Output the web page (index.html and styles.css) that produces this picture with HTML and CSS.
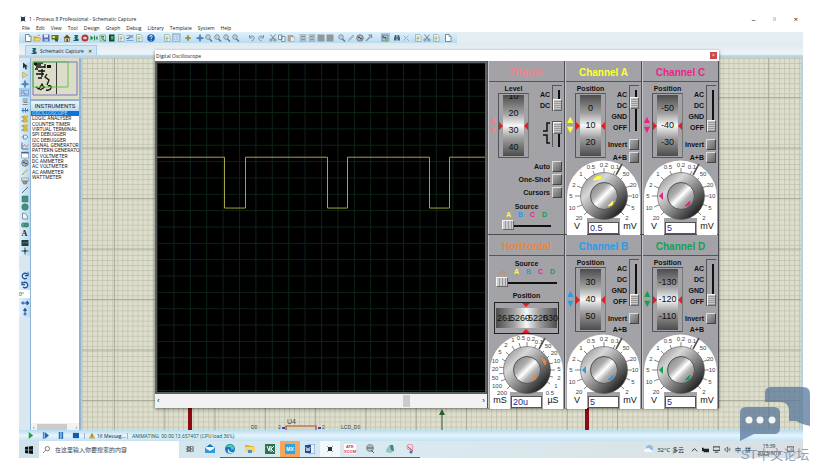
FILE: index.html
```
<!DOCTYPE html>
<html lang="en">
<head>
    <meta charset="UTF-8">
    <title>Schematic Capture</title>
    <link rel="stylesheet" href="styles.css">
</head>
<body>

<!-- shared icons -->
<svg class="defs" aria-hidden="true">
    <defs>
        <linearGradient id="knobOuter" x1="0" y1="0" x2="1" y2="1">
            <stop offset="0" stop-color="#777"/>
            <stop offset=".3" stop-color="#d8d8d8"/>
            <stop offset=".6" stop-color="#777"/>
            <stop offset=".85" stop-color="#222"/>
            <stop offset="1" stop-color="#666"/>
        </linearGradient>
        <linearGradient id="knobInner" x1="0" y1="0" x2="1" y2="1">
            <stop offset="0" stop-color="#777"/>
            <stop offset=".35" stop-color="#b0b0b0"/>
            <stop offset=".5" stop-color="#fff"/>
            <stop offset=".65" stop-color="#b4b4b4"/>
            <stop offset="1" stop-color="#666"/>
        </linearGradient>
        <pattern id="minor" width="5.05" height="5.05" patternUnits="userSpaceOnUse">
            <path d="M0 .5H5.05M.5 0V5.05" stroke="#bfbfaf" stroke-width=".7" fill="none"/>
        </pattern>
        <pattern id="major" x="32" y="39" width="50.3" height="50.5" patternUnits="userSpaceOnUse">
            <path d="M0 .5H50.5M.5 0V50.5" stroke="#a2a294" stroke-width=".8" fill="none"/>
        </pattern>
        <pattern id="scopeGrid" width="16.4" height="16.4" patternUnits="userSpaceOnUse">
            <path d="M0 .5H16.4M.5 0V16.4" stroke="#0c2413" stroke-width="1" fill="none"/>
        </pattern>
        <g id="knob">
            <circle cx="37" cy="36" r="23.500" fill="url(#knobOuter)" stroke="#555" stroke-width=".6"/>
            <circle cx="37" cy="36" r="13.500" fill="url(#knobInner)" stroke="#555"/>
            <path d="M46 41l-5 5 4-1z" fill="currentColor" stroke="currentColor"/>
        </g>
    </defs>

    <symbol id="i-new" viewBox="0 0 16 16"><path d="M3 1h7l4 4v10H3z" fill="#fff" stroke="#55656f" stroke-width="1.5"/><path d="M10 1v4h4" fill="none" stroke="#55656f"/></symbol>
    <symbol id="i-open" viewBox="0 0 16 16"><path d="M1 4h5l1 2h6v8H1z" fill="#e0b040"/><path d="M4 8h12l-3 6H1z" fill="#f5d778" stroke="#9a7a28" stroke-width=".7"/><path d="M9 3q3-3 5 1" stroke="#468" fill="none"/></symbol>
    <symbol id="i-save" viewBox="0 0 16 16"><path d="M1 1h14v14H1z" fill="#6068b8"/><path d="M4 1h8v6H4z" fill="#e6eaff"/><path d="M5 10h7v5H5z" fill="#b4bbe4"/></symbol>
    <symbol id="i-pack" viewBox="0 0 16 16"><path d="M1 2h14v9H1z" fill="#55752a"/><path d="M3 4h5v4H3z" fill="#f0e04a"/><path d="M7 10h7v5H9z" fill="#3b4c66"/></symbol>
    <symbol id="i-home" viewBox="0 0 16 16"><path d="M3 8v7h10V8z" fill="#e6cf8e" stroke="#544018"/><path d="M8 1L1 8h14z" fill="#6e5220"/><path d="M7 10h3v5H7z" fill="#314c31"/></symbol>
    <symbol id="i-isis" viewBox="0 0 16 16"><path d="M4 2h9l-3 3h3l-4 4h4v5H3v-2h4L4 9h3L4 6h3z" fill="#1e5968"/></symbol>
    <symbol id="i-stop" viewBox="0 0 16 16"><circle cx="8" cy="8" r="7" fill="#b83232"/><path d="M4 8h8M8 5v6" stroke="#fff" stroke-width="2"/></symbol>
    <symbol id="i-sim" viewBox="0 0 16 16"><path d="M1 3l6 5-6 5zM8 3h2v10H8zM11 8l4-5v10z" fill="#28864b"/></symbol>
    <symbol id="i-view" viewBox="0 0 16 16"><path d="M2 2h11v12H2z" fill="#d5ead7" stroke="#31814b"/><path d="M4 5h6M4 8h6M6 10l8 4" stroke="#31814b" stroke-width="2"/></symbol>
    <symbol id="i-book" viewBox="0 0 16 16"><path d="M2 1h11v14H2z" fill="#164a30"/><path d="M6 4h5v7H6z" fill="#46bb6c"/></symbol>
    <symbol id="i-page" viewBox="0 0 16 16"><path d="M3 1h8l3 3v11H3z" fill="#f6f8f2" stroke="#728080"/><path d="M5 6h6M5 9h6M5 12h5" stroke="#73945b" stroke-width="1.4"/></symbol>
    <symbol id="i-wave" viewBox="0 0 16 16"><path d="M1 3h14M1 13h14" stroke="#4465a0"/><path d="M1 9h5v-3h8" stroke="#4465a0" stroke-width="2" fill="none"/></symbol>
    <symbol id="i-help" viewBox="0 0 16 16"><circle cx="8" cy="8" r="7.5" fill="#1a59b4"/><path d="M5.500 6q0-3 2.500-3t2.500 2.500q0 1.500-2.500 3V10M8 11.500v2" fill="none" stroke="#fff" stroke-width="1.800"/></symbol>
    <symbol id="i-grid" viewBox="0 0 16 16"><path d="M1 1h14v14H1z" fill="#c9dff0" stroke="#7b9fbd"/><path d="M2 5h12M2 8h12M2 11h12" stroke="#54718b" stroke-dasharray="1 2"/></symbol>
    <symbol id="i-origin" viewBox="0 0 16 16"><path d="M8 2v12M2 8h12" stroke="#756d24" stroke-width="2"/><circle cx="8" cy="8" r="3" fill="#9b8b28"/></symbol>
    <symbol id="i-plus" viewBox="0 0 16 16"><path d="M8 1v14M1 8h14" stroke="#225c9c" stroke-width="2.5"/><path d="M5 5h6v6H5z" fill="#4b84bf"/></symbol>
    <symbol id="i-zoom" viewBox="0 0 16 16"><circle cx="6" cy="6" r="4.5" fill="#dde9ed" stroke="#5e7281" stroke-width="1.6"/><path d="M9 10l5 5" stroke="#5e7281" stroke-width="2.5"/><path d="M4 6h4" stroke="#5e7281"/></symbol>
    <symbol id="i-undo" viewBox="0 0 16 16"><path d="M3 2v6h6M3 8q2-5 7-4 4 2 2 6-1 3-5 4" fill="none" stroke="#8094a3" stroke-width="2"/></symbol>
    <symbol id="i-redo" viewBox="0 0 16 16"><path d="M13 2v6H7M13 8q-2-5-7-4-4 2-2 6 1 3 5 4" fill="none" stroke="#8094a3" stroke-width="2"/></symbol>
    <symbol id="i-cut" viewBox="0 0 16 16"><path d="M3 1l8 10M13 1L5 11" stroke="#708291" stroke-width="2"/><circle cx="4" cy="12" r="2.3" fill="none" stroke="#708291" stroke-width="1.8"/><circle cx="12" cy="12" r="2.3" fill="none" stroke="#708291" stroke-width="1.8"/></symbol>
    <symbol id="i-copy" viewBox="0 0 16 16"><path d="M1 2h7v9H1zM7 5h7v10H7z" fill="#eef4f8" stroke="#5b758a" stroke-width="1.5"/></symbol>
    <symbol id="i-paste" viewBox="0 0 16 16"><path d="M2 3h10v11H2z" fill="#b2aa98" stroke="#84867c"/><path d="M7 6h8v9H7z" fill="#eee" stroke="#8d969b"/></symbol>
    <symbol id="i-block" viewBox="0 0 16 16"><path d="M1 2h14M3 5h10M1 8h14M3 11h10M1 14h14" stroke="#8998a0" stroke-width="2"/></symbol>
    <symbol id="i-solid" viewBox="0 0 16 16"><path d="M1 1h14v14H1z" fill="#8d999d"/></symbol>
    <symbol id="i-pen" viewBox="0 0 16 16"><path d="M3 14l2-5 7-7 2 2-7 7z" fill="#b9bfbd" stroke="#8e989b"/></symbol>
    <symbol id="i-hammer" viewBox="0 0 16 16"><path d="M2 14L11 5M7 2h6v6" stroke="#7d8d99" stroke-width="2.5" fill="none"/></symbol>
    <symbol id="i-tag" viewBox="0 0 16 16"><path d="M2 2h12v12H2z" fill="#a8c0cc" stroke="#557"/><path d="M3 4l10 8M3 7h7" stroke="#3c5a64" stroke-width="2"/><path d="M9 10h6v5H9z" fill="#83b73c"/></symbol>
    <symbol id="i-app" viewBox="0 0 16 16"><path d="M3 2l10 12M13 2L3 14" stroke="#8ba4bd" stroke-width="2"/><path d="M4 4h8v8H4z" fill="#2c4257"/></symbol>
    <symbol id="i-find" viewBox="0 0 16 16"><path d="M2 13V8l2-6h3v5h2V2h3l2 6v5H9v-4H7v4z" fill="#4c6071"/></symbol>
    <symbol id="i-cross" viewBox="0 0 16 16"><path d="M3 13L13 3M3 3l4 4M10 10l4 4" stroke="#9dadb9" stroke-width="2"/></symbol>

    <symbol id="t-arrow" viewBox="0 0 16 16"><path d="M4 1v12l3-3 2 5 3-1-2-5h4z" fill="#27343e"/></symbol>
    <symbol id="t-play" viewBox="0 0 16 16"><path d="M3 2v12l10-6z" fill="#e8d878" stroke="#999050"/></symbol>
    <symbol id="t-label" viewBox="0 0 16 16"><path d="M1 3h14v10H1z" fill="#bdd3ec" stroke="#5d82ba"/><path d="M3 6h3v4h7" stroke="#4b72b5" fill="none" stroke-width="1.5"/></symbol>
    <symbol id="t-text" viewBox="0 0 16 16"><path d="M3 2h10M3 6h10M5 9h8M3 13h10" stroke="#70808b" stroke-width="1.8"/></symbol>
    <symbol id="t-bus" viewBox="0 0 16 16"><path d="M1 9h14M4 4v9M9 4v9M13 6v5" stroke="#3f75bb" stroke-width="2"/></symbol>
    <symbol id="t-chip" viewBox="0 0 16 16"><path d="M4 1h10v5h-2v3h2v6H4z" fill="#d8b83c"/><path d="M1 4h4M1 12h4" stroke="#65747b" stroke-width="2"/></symbol>
    <symbol id="t-term" viewBox="0 0 16 16"><path d="M5 4h5l4 4-4 4H5zM1 8h4" fill="#e9eef0" stroke="#55738b" stroke-width="1.4"/></symbol>
    <symbol id="t-graph" viewBox="0 0 16 16"><path d="M2 1v13h13" stroke="#3c6ba5" fill="none" stroke-width="2"/><path d="M3 11l4-6 4 5 4-5" stroke="#b36b5d" fill="none" stroke-width="1.5"/></symbol>
    <symbol id="t-win" viewBox="0 0 16 16"><path d="M1 2h14v12H1z" fill="#fff" stroke="#526f8f"/><path d="M1 2h14v3H1z" fill="#446999"/></symbol>
    <symbol id="t-gen" viewBox="0 0 16 16"><circle cx="8" cy="8" r="6.5" fill="#aebac3" stroke="#5d6770" stroke-width="1.5"/><path d="M4 8q2-5 4 0t4 0" stroke="#222" fill="none" stroke-width="1.5"/></symbol>
    <symbol id="t-probe" viewBox="0 0 16 16"><path d="M2 14l5-5" stroke="#61717a" stroke-width="1.5"/><path d="M6 10l7-7" stroke="#d4be52" stroke-width="3"/></symbol>
    <symbol id="t-meter" viewBox="0 0 16 16"><path d="M1 2h14v6H1z" fill="#dce2e2" stroke="#65747d"/><path d="M3 8h10l-2 6H5z" fill="#a3977c" stroke="#655f53"/></symbol>
    <symbol id="t-line" viewBox="0 0 16 16"><path d="M2 14L14 2" stroke="#425d70" stroke-width="1.8"/></symbol>
    <symbol id="t-box" viewBox="0 0 16 16"><path d="M2 2h12v12H2z" fill="#43917d" stroke="#306f61"/></symbol>
    <symbol id="t-circle" viewBox="0 0 16 16"><circle cx="8" cy="8" r="6.5" fill="#43917d" stroke="#306f61"/></symbol>
    <symbol id="t-arc" viewBox="0 0 16 16"><path d="M3 2q10 0 10 12H3z" fill="#edf7f7" stroke="#536e80" stroke-width="1.4"/></symbol>
    <symbol id="t-path" viewBox="0 0 16 16"><circle cx="5" cy="8" r="4.5" fill="#5f9f8e" stroke="#306f61"/><circle cx="11" cy="8" r="4.5" fill="#43917d" stroke="#306f61"/></symbol>
    <symbol id="t-symbol" viewBox="0 0 16 16"><path d="M1 2h14v12H1z" fill="#243c3f"/><path d="M3 9l4-3 3 3 4-3" stroke="#9db5a2" fill="none"/></symbol>
    <symbol id="t-marker" viewBox="0 0 16 16"><path d="M8 1v14M1 8h14" stroke="#3b5058" stroke-width="2"/><circle cx="8" cy="8" r="2.5" fill="#3b5058"/></symbol>
    <symbol id="t-cw" viewBox="0 0 16 16"><path d="M12 4q-4-3-8 0-3 4 0 8 4 3 8 0M14 1v6H8" fill="none" stroke="#27509a" stroke-width="2.5"/></symbol>
    <symbol id="t-ccw" viewBox="0 0 16 16"><path d="M4 4q4-3 8 0 3 4 0 8-4 3-8 0M2 1v6h6" fill="none" stroke="#27509a" stroke-width="2.5"/></symbol>
    <symbol id="t-fliph" viewBox="0 0 16 16"><path d="M0 8h16M4 5v6M12 4l3 4-3 4z" fill="#27509a" stroke="#27509a" stroke-width="2"/></symbol>
    <symbol id="t-flipv" viewBox="0 0 16 16"><path d="M8 1v14M5 12h6M5 5l3-4 3 4z" fill="#27509a" stroke="#27509a" stroke-width="2"/></symbol>

    <!-- volts/div scale -->
    <symbol id="volts" viewBox="0 0 73 62">
        <path d="M0 62V37a36.500 36.500 0 0 1 73 0v25H53v-4H20v4z" fill="#fff"/>
        <g stroke="#666" stroke-width=".8">
            <path d="M37 8v6M26 11l2 5M17 17l4 4M10 26l5 2M8 36h6M10 47l5-2M17 55l4-4M48 11l-2 4M55 18l-4 4M63 26l-5 2M65 36h-6M63 46l-5-2M57 55l-4-4"/>
        </g>
        <path d="M55 4l-6 11" stroke="#555" stroke-width="1.600"/>
        <g class="scale">
            <text x="12" y="60">20</text><text x="5" y="50">10</text><text x="4" y="38">5</text><text x="7" y="27">2</text>
            <text x="14" y="16">1</text><text x="24" y="9">0.5</text><text x="37" y="7">0.2</text><text x="48" y="9">0.1</text>
            <text x="59" y="16">50</text><text x="66" y="27">20</text><text x="68" y="38">10</text><text x="66" y="50">5</text><text x="60" y="60">2</text>
        </g>
        <use href="#knob"/>
    </symbol>
    <!-- time/div scale -->
    <symbol id="times" viewBox="0 0 73 62">
        <path d="M0 62V37a36.500 36.500 0 0 1 73 0v25H53v-4H20v4z" fill="#fff"/>
        <path d="M37 8v6M29 9l2 6M22 12l3 5M16 18l4 4M12 25l5 3M9 33l6 1M9 40l6-1M11 47l5-2M17 55l4-4M46 11l-2 4M54 17l-4 4M59 22l-4 4M63 29l-5 1M65 36h-6M63 43l-5-1M60 50l-4-3" stroke="#666" stroke-width=".8"/>
        <path d="M55 4l-6 11" stroke="#555" stroke-width="1.600"/>
        <g class="scale">
            <text x="12" y="61">200</text><text x="7" y="54">100</text><text x="5" y="46">50</text><text x="5" y="37">20</text>
            <text x="5" y="29">10</text><text x="10" y="20">5</text><text x="16" y="13">2</text><text x="23" y="8">1</text>
            <text x="31" y="6">0.5</text><text x="41" y="7">0.2</text><text x="49" y="10">0.1</text><text x="58" y="14">50</text>
            <text x="64" y="21">20</text><text x="67" y="29">10</text><text x="69" y="37">5</text><text x="69" y="46">2</text><text x="66" y="54">1</text><text x="60" y="61">0.5</text>
        </g>
        <use href="#knob"/>
    </symbol>
</svg>

<div class="screen">
    <header class="titlebar">
        <svg class="ic"><use href="#i-app"/></svg>
        <span class="caption">1 - Proteus 8 Professional - Schematic Capture</span>
        <div class="winbtns">
            <button aria-label="Minimize">–</button>
            <button aria-label="Restore">▫</button>
            <button aria-label="Close">×</button>
        </div>
    </header>
    <nav class="menubar">
        <button>File</button><button>Edit</button><button>View</button><button>Tool</button><button>Design</button><button>Graph</button><button>Debug</button><button>Library</button><button>Template</button><button>System</button><button>Help</button>
    </nav>
    <div class="toolbar">
        <div class="strip">
            <div class="group">
                <button aria-label="New"><svg><use href="#i-new"/></svg></button><button aria-label="Open"><svg><use href="#i-open"/></svg></button><button aria-label="Save"><svg><use href="#i-save"/></svg></button><button aria-label="Import"><svg><use href="#i-pack"/></svg></button>
            </div>
            <div class="group">
                <button aria-label="Home"><svg><use href="#i-home"/></svg></button><button aria-label="Schematic"><svg><use href="#i-isis"/></svg></button><button aria-label="PCB"><svg><use href="#i-stop"/></svg></button><button aria-label="3D"><svg><use href="#i-sim"/></svg></button><button aria-label="Gerber"><svg><use href="#i-view"/></svg></button><button aria-label="Explorer"><svg><use href="#i-book"/></svg></button><button aria-label="Bill"><svg><use href="#i-page"/></svg></button><button aria-label="Code"><svg><use href="#i-wave"/></svg></button><button aria-label="Notes"><svg><use href="#i-page"/></svg></button>
            </div>
            <div class="group">
                <button aria-label="Help"><svg><use href="#i-help"/></svg></button>
            </div>
            <div class="group wide">
                <button aria-label="Redraw"><svg><use href="#i-page"/></svg></button><button class="on" aria-label="Grid"><svg><use href="#i-grid"/></svg></button>
            </div>
            <div class="group">
                <button aria-label="Origin"><svg><use href="#i-origin"/></svg></button>
            </div>
            <div class="group">
                <button aria-label="Centre"><svg><use href="#i-plus"/></svg></button><button aria-label="Zoom in"><svg><use href="#i-zoom"/></svg></button><button aria-label="Zoom out"><svg><use href="#i-zoom"/></svg></button><button aria-label="Zoom all"><svg><use href="#i-zoom"/></svg></button><button aria-label="Zoom area"><svg><use href="#i-zoom"/></svg></button>
            </div>
            <div class="group wide">
                <button aria-label="Undo"><svg><use href="#i-undo"/></svg></button><button aria-label="Redo"><svg><use href="#i-redo"/></svg></button>
            </div>
            <div class="group">
                <button aria-label="Cut"><svg><use href="#i-cut"/></svg></button><button aria-label="Copy"><svg><use href="#i-copy"/></svg></button><button aria-label="Paste"><svg><use href="#i-paste"/></svg></button>
            </div>
            <div class="group">
                <button aria-label="Block copy"><svg><use href="#i-block"/></svg></button><button aria-label="Block move"><svg><use href="#i-block"/></svg></button><button aria-label="Block rotate"><svg><use href="#i-solid"/></svg></button><button aria-label="Block delete"><svg><use href="#i-solid"/></svg></button>
            </div>
            <div class="group">
                <button aria-label="Pick"><svg><use href="#i-zoom"/></svg></button><button aria-label="Make"><svg><use href="#i-pen"/></svg></button><button aria-label="Package"><svg><use href="#t-gen"/></svg></button><button aria-label="Decompose"><svg><use href="#i-hammer"/></svg></button>
            </div>
            <div class="group wide">
                <button class="on" aria-label="Autorouter"><svg><use href="#i-tag"/></svg></button>
            </div>
            <div class="group">
                <button aria-label="Search"><svg><use href="#i-find"/></svg></button><button aria-label="Property"><svg><use href="#i-cross"/></svg></button>
            </div>
            <div class="group">
                <button aria-label="New sheet"><svg><use href="#i-page"/></svg></button><button aria-label="Remove sheet"><svg><use href="#i-cut"/></svg></button><button aria-label="Exit sheet"><svg><use href="#i-page"/></svg></button>
            </div>
            <div class="group">
                <button aria-label="Report"><svg><use href="#i-new"/></svg></button>
            </div>
        </div>
    </div>
    <div class="tabs">
        <div class="tab">
            <svg class="ic"><use href="#i-isis"/></svg>
            <span>Schematic Capture</span>
            <button aria-label="Close tab">✕</button>
        </div>
    </div>

    <main class="main">
        <div class="modes">
            <div class="modelist">
                <button aria-label="Selection"><svg><use href="#t-arrow"/></svg></button>
                <button aria-label="Component"><svg><use href="#t-play"/></svg></button>
                <button aria-label="Junction"><svg><use href="#i-plus"/></svg></button>
                <button class="on" aria-label="Label"><svg><use href="#t-label"/></svg></button>
                <button aria-label="Script"><svg><use href="#t-text"/></svg></button>
                <button aria-label="Bus"><svg><use href="#t-bus"/></svg></button>
                <button aria-label="Subcircuit"><svg><use href="#t-chip"/></svg></button>
                <button aria-label="Terminals"><svg><use href="#t-chip"/></svg></button>
                <button aria-label="Pins"><svg><use href="#t-term"/></svg></button>
                <button aria-label="Graph mode"><svg><use href="#t-graph"/></svg></button>
                <button aria-label="Popup"><svg><use href="#t-win"/></svg></button>
                <button aria-label="Generator"><svg><use href="#t-gen"/></svg></button>
                <button aria-label="Probe"><svg><use href="#t-probe"/></svg></button>
                <button aria-label="Instruments"><svg><use href="#t-meter"/></svg></button>
                <button aria-label="Line"><svg><use href="#t-line"/></svg></button>
                <button aria-label="Box"><svg><use href="#t-box"/></svg></button>
                <button aria-label="Circle"><svg><use href="#t-circle"/></svg></button>
                <button aria-label="Arc"><svg><use href="#t-arc"/></svg></button>
                <button aria-label="Path"><svg><use href="#t-path"/></svg></button>
                <button class="letter" aria-label="Text">A</button>
                <button aria-label="Symbol"><svg><use href="#t-symbol"/></svg></button>
                <button aria-label="Marker"><svg><use href="#t-marker"/></svg></button>
            </div>
            <div class="rotate">
                <button aria-label="Rotate clockwise"><svg><use href="#t-cw"/></svg></button>
                <button aria-label="Rotate anticlockwise"><svg><use href="#t-ccw"/></svg></button>
                <input type="text" value="0°" aria-label="Angle">
                <button aria-label="Mirror X"><svg><use href="#t-fliph"/></svg></button>
                <button aria-label="Mirror Y"><svg><use href="#t-flipv"/></svg></button>
            </div>
        </div>

        <aside class="side">
            <svg class="overview" viewBox="0 0 48 41">
                <g fill="none" stroke="#111">
                    <path d="M25.500 4v32" stroke-width=".8"/>
                    <path d="M3 5h9M4 7h6M5 9h9M4 11h3M7 13h7M5 16h8M14 6v4M11 11v8M16 16l-2 3 4 3-2 5M7 20h4M5 29l3 2 3-5 2 4M9 32l5-3M17 28q4-1 3 2t-5 2" stroke-width="1.300"/>
                </g>
                <path d="M16 7h4v3h-4zM3 4h3v3H3z" fill="#111"/>
                <path d="M2 4h44v33H2z" fill="none" stroke="#6c6cc4" stroke-width=".9"/>
                <path d="M2 4h35v25H2z" fill="none" stroke="#4ec43f" stroke-width=".9"/>
            </svg>
            <div class="panel">
                <h2>INSTRUMENTS</h2>
                <ul>
                    <li class="sel">OSCILLOSCOPE</li>
                    <li>LOGIC ANALYSER</li>
                    <li>COUNTER TIMER</li>
                    <li>VIRTUAL TERMINAL</li>
                    <li>SPI DEBUGGER</li>
                    <li>I2C DEBUGGER</li>
                    <li>SIGNAL GENERATOR</li>
                    <li>PATTERN GENERATO</li>
                    <li>DC VOLTMETER</li>
                    <li>DC AMMETER</li>
                    <li>AC VOLTMETER</li>
                    <li>AC AMMETER</li>
                    <li>WATTMETER</li>
                </ul>
                <div class="hscroll"><button aria-label="Left">‹</button><i></i><button aria-label="Right">›</button></div>
            </div>
        </aside>

        <div class="editor">
            <svg class="sheet">
                <rect width="100%" height="100%" fill="url(#minor)"/>
                <rect width="100%" height="100%" fill="url(#major)"/>
                <path d="M108 345v30M505 345v30" stroke="#8c0a12" stroke-width="4"/>
                <path d="M204 375v-7h30v7" fill="#d6d3b0" stroke="#a8483a" stroke-width="1.200"/>
                <path d="M360 375v-22" stroke="#285c28"/>
                <path d="M360 351l-3 6h6z" fill="#285c28"/>
                <path d="M200 369h3v2h-3zM236 369h3v2h-3z" fill="#4040c0"/>
                <g class="net">
                    <text x="205" y="366" class="ref">U4</text>
                    <text x="169" y="371">D0</text>
                    <text x="196" y="371">2</text>
                    <text x="240" y="371">2</text>
                    <text x="259" y="371">LCD_D0</text>
                </g>
            </svg>
        </div>
    </main>

    <footer class="status">
        <div class="run">
            <button aria-label="Play"><svg viewBox="0 0 8 8"><path d="M2 0v8l5-4z" fill="#25a23b"/></svg></button>
            <button aria-label="Step"><svg viewBox="0 0 8 8"><path d="M1 0h1v8H1zM3 0v8l5-4z" fill="#1f65b7"/></svg></button>
            <button aria-label="Pause"><svg viewBox="0 0 8 8"><path d="M2 0h2v8H2zM5 0h2v8H5z" fill="#2672c2"/></svg></button>
            <button aria-label="Stop"><svg viewBox="0 0 8 8"><path d="M1 1h7v6H1z" fill="#115dad"/></svg></button>
        </div>
        <div class="messages">
            <svg viewBox="0 0 8 8"><path d="M4 0l4 7H0z" fill="#f0c52e" stroke="#917718" stroke-width=".4"/><path d="M4 2v3M4 6v.7" stroke="#222"/></svg>
            <span>16 Messag...</span>
        </div>
        <span class="anim">ANIMATING: 00:00:13.657407 (CPU load 36%)</span>
    </footer>

    <div class="taskbar">
        <button class="start" aria-label="Start"><svg viewBox="0 0 8 8"><path d="M0 1l3-.5v3.200H0zM3.700.5L8 0v3.700H3.700zM0 4.300h3v3.200L0 7zM3.700 4.300H8V8l-4.300-.5z" fill="#111"/></svg></button>
        <label class="search">
            <svg viewBox="0 0 8 8"><circle cx="5" cy="3" r="2.500" fill="none" stroke="#333" stroke-width=".7"/><path d="M3 5L0 8" stroke="#333" stroke-width=".7"/></svg>
            <input type="text" placeholder="在这里输入你要搜索的内容" aria-label="Search">
        </label>
        <div class="apps">
            <button aria-label="Task view"><svg viewBox="0 0 10 10"><path d="M2 2v1h4V2M2 8V7h4v1M2 4h4v2H2zM8 2v6" fill="none" stroke="#333" stroke-width=".8"/></svg></button>
            <button aria-label="Mail"><svg viewBox="0 0 10 10"><path d="M0 4l5-4 5 4v5H0z" fill="#1270b8"/><path d="M1 3h8v3L5 8 1 6z" fill="#eef6fb"/><path d="M0 4l5 3 5-3v5H0z" fill="#2f9bdf"/></svg></button>
            <button class="open" aria-label="Edge"><svg viewBox="0 0 10 10"><circle cx="5" cy="5" r="5" fill="#1878c8"/><path d="M1 3q4-5 8 0 1 3-3 3 1-3-2-3T1 3z" fill="#4bcf9b"/><path d="M4 5q0 4 5 3-4 3-6 0-1-2 1-3z" fill="#d8eff8"/></svg></button>
            <button class="open" aria-label="Files"><svg viewBox="0 0 10 10"><path d="M0 1h4l1 1h4v6H0z" fill="#eab32e"/><path d="M0 3h10v5H0z" fill="#f8d66c"/><path d="M3 6h4v3H3z" fill="#4c8fc4"/></svg></button>
            <button class="open" aria-label="Keil"><svg viewBox="0 0 10 10"><path d="M0 0h10v10H0z" fill="#2b7350"/><path d="M2 2l2 5 1-5M6 2v6M9 2L6 5l3 3" stroke="#fff" fill="none"/></svg></button>
            <button class="open hot" aria-label="CubeMX"><span>MX</span></button>
            <button class="open" aria-label="Word"><svg viewBox="0 0 10 10"><path d="M4 0h6v10H4z" fill="#e5eef9" stroke="#2858a0" stroke-width=".6"/><path d="M0 1h6v8H0z" fill="#214f99"/><path d="M1 3l1 4 1-3 1 3 1-4" stroke="#fff" fill="none" stroke-width=".7"/></svg></button>
            <button class="open active" aria-label="Proteus"><svg viewBox="0 0 10 10"><path d="M2 2l6 6M8 2L2 8" stroke="#8aa0b6"/><path d="M3 3h4v4H3z" fill="#26333c"/></svg></button>
            <button class="open" aria-label="ATK XCOM"><span class="atk">ATK<br>XCOM</span></button>
            <button class="open" aria-label="Viewer"><svg viewBox="0 0 10 10"><circle cx="5" cy="4" r="3.500" fill="#b3bcc1" stroke="#67747c" stroke-width=".7"/><path d="M2 4h6M6 6l3 3" stroke="#4f5e68"/></svg></button>
            <button class="open" aria-label="Disk"><svg viewBox="0 0 10 10"><path d="M1 8q0-4 4-7h3l1 6-3 2z" fill="#8fc5c5"/><path d="M5 1h3l1 6-3-1z" fill="#477f87"/></svg></button>
            <button class="open" aria-label="Capture"><svg viewBox="0 0 10 10"><circle cx="5" cy="3" r="3" fill="#f3d7df" stroke="#e0708c" stroke-width=".7"/><path d="M3 3l5 4" stroke="#d33d55"/><circle cx="6" cy="8" r="1.500" fill="#3973bd"/></svg></button>
        </div>
        <div class="tray">
            <svg class="cloud" viewBox="0 0 10 10"><circle cx="6" cy="4" r="4" fill="#8fbce8"/><path d="M0 7q0-3 3-3 3-2 4 1 3 0 2 3H2z" fill="#f2f8fd"/></svg>
            <span class="weather">32°C 多云</span>
            <svg viewBox="0 0 8 8"><path d="M1 6l3-3 3 3" fill="none" stroke="#222"/></svg>
            <svg viewBox="0 0 8 8"><path d="M0 2h2v4H0zM2 3h6v4H2z" fill="#222"/></svg>
            <svg viewBox="0 0 8 8"><path d="M0 1h8v4H0zM2 7h4" fill="none" stroke="#222"/></svg>
            <svg viewBox="0 0 8 8"><path d="M1 3h1l2-2v6L2 5H1zM5 3q1 1 0 2M6 2q2 2 0 4" fill="none" stroke="#222" stroke-width=".6"/></svg>
            <span>中</span>
            <span>拼</span>
            <time>15:39<br>2023/6/16</time>
            <svg viewBox="0 0 8 8"><path d="M0 1h8v5H5L4 7 3 6H0z" fill="none" stroke="#222" stroke-width=".8"/></svg>
        </div>
    </div>

    <!-- oscilloscope window floats over the editor -->
    <section class="scope">
        <div class="scope-title">
            <span>Digital Oscilloscope</span>
            <button aria-label="Close">×</button>
        </div>
        <div class="scope-body">
            <div class="display">
                <svg class="trace" viewBox="0 0 328 330" preserveAspectRatio="none">
                    <rect width="328" height="330" fill="url(#scopeGrid)"/>
                    <path d="M0 94.500H67.500V145.500H88.500V94.500H170.500V145.500H190.500V94.500H272.500V145.500H292.500V94.500H328" fill="none" stroke="#a5a544"/>
                </svg>
                <div class="hscroll big"><button aria-label="Scroll left">‹</button><i></i><button aria-label="Scroll right">›</button></div>
            </div>

            <div class="modules">
                <div class="module trigger">
                    <h3>Trigger</h3>
                    <div class="controls">
                        <div class="position">
                            <span class="name">Level</span>
                            <div class="frame"><div class="wheel four"><b>10</b><b>20</b><b>30</b><b>40</b></div></div>
                        </div>
                        <div class="switches">
                            <div class="coupling two"><div><label for="tc">AC</label><span>DC</span></div><input id="tc" type="range" min="0" max="1" value="1"></div>
                            <div class="coupling edge"><svg viewBox="0 0 8 24"><path d="M1 10h4V2h3M1 14h4v8h3" fill="none" stroke="#111" stroke-width="1.500"/></svg><input type="range" min="0" max="1" value="0" aria-label="Edge"></div>
                        </div>
                    </div>
                    <div class="push">
                        <label>Auto <button></button></label>
                        <label>One-Shot <button></button></label>
                        <label>Cursors <button></button></label>
                    </div>
                    <div class="source">
                        <label for="ts">Source</label>
                        <div class="letters"><b class="a">A</b><b class="b">B</b><b class="c">C</b><b class="d">D</b></div>
                        <input id="ts" type="range" min="0" max="3" value="0">
                    </div>
                </div>

                <div class="module cha">
                    <h3>Channel A</h3>
                    <div class="controls">
                        <div class="position">
                            <span class="name">Position</span>
                            <div class="frame"><div class="wheel"><b>0</b><b>10</b><b>20</b></div></div>
                        </div>
                        <div class="switches">
                            <div class="coupling"><div><label for="ca">AC</label><span>DC</span><span>GND</span><span>OFF</span></div><input id="ca" type="range" min="0" max="3" value="1"></div>
                            <label class="key">Invert <button></button></label>
                            <label class="key">A+B <button></button></label>
                        </div>
                    </div>
                    <div class="dial"><svg viewBox="0 0 73 62"><use href="#volts"/><path d="M26 20q3-4 8-4l-1 3z" fill="currentColor" stroke="currentColor"/></svg></div>
                    <div class="readout"><span>V</span><input type="text" value="0.5" aria-label="Volts A"><span>mV</span></div>
                </div>

                <div class="module chc">
                    <h3>Channel C</h3>
                    <div class="controls">
                        <div class="position">
                            <span class="name">Position</span>
                            <div class="frame"><div class="wheel"><b>-50</b><b>-40</b><b>-30</b></div></div>
                        </div>
                        <div class="switches">
                            <div class="coupling"><div><label for="cc">AC</label><span>DC</span><span>GND</span><span>OFF</span></div><input id="cc" type="range" min="0" max="3" value="3"></div>
                            <label class="key">Invert <button></button></label>
                            <label class="key">A+B <button></button></label>
                        </div>
                    </div>
                    <div class="dial"><svg viewBox="0 0 73 62"><use href="#volts"/><path d="M15 36l4-4v8z" fill="currentColor"/></svg></div>
                    <div class="readout"><span>V</span><input type="text" value="5" aria-label="Volts C"><span>mV</span></div>
                </div>

                <div class="module horizontal">
                    <h3>Horizontal</h3>
                    <div class="source">
                        <label for="hs">Source</label>
                        <div class="letters"><svg viewBox="0 0 9 5"><path d="M0 4l6-3v3l3-3" fill="none" stroke="#e08545"/></svg><b class="a">A</b><b class="b">B</b><b class="c">C</b><b class="d">D</b></div>
                        <input id="hs" type="range" min="0" max="4" value="0">
                    </div>
                    <div class="timepos">
                        <span class="name">Position</span>
                        <div class="hframe"><div class="hwheel"><b>261</b><b>-5260</b><b>-5220</b><b>530</b></div></div>
                    </div>
                    <div class="dial"><svg viewBox="0 0 73 62"><use href="#times"/><path d="M51 23l5 4-1 4z" fill="currentColor" stroke="currentColor"/></svg></div>
                    <div class="readout"><span>mS</span><input type="text" value="20u" aria-label="Time base"><span>µS</span></div>
                </div>

                <div class="module chb">
                    <h3>Channel B</h3>
                    <div class="controls">
                        <div class="position">
                            <span class="name">Position</span>
                            <div class="frame"><div class="wheel"><b>30</b><b>40</b><b>50</b></div></div>
                        </div>
                        <div class="switches">
                            <div class="coupling"><div><label for="cb">AC</label><span>DC</span><span>GND</span><span>OFF</span></div><input id="cb" type="range" min="0" max="3" value="3"></div>
                            <label class="key">Invert <button></button></label>
                            <span class="key bare">A+B</span>
                        </div>
                    </div>
                    <div class="dial"><svg viewBox="0 0 73 62"><use href="#volts"/><path d="M15 36l4-4v8z" fill="currentColor"/></svg></div>
                    <div class="readout"><span>V</span><input type="text" value="5" aria-label="Volts B"><span>mV</span></div>
                </div>

                <div class="module chd">
                    <h3>Channel D</h3>
                    <div class="controls">
                        <div class="position">
                            <span class="name">Position</span>
                            <div class="frame"><div class="wheel"><b>-130</b><b>-120</b><b>-110</b></div></div>
                        </div>
                        <div class="switches">
                            <div class="coupling"><div><label for="cd">AC</label><span>DC</span><span>GND</span><span>OFF</span></div><input id="cd" type="range" min="0" max="3" value="3"></div>
                            <label class="key">Invert <button></button></label>
                            <span class="key bare">A+B</span>
                        </div>
                    </div>
                    <div class="dial"><svg viewBox="0 0 73 62"><use href="#volts"/><path d="M15 36l4-4v8z" fill="currentColor"/></svg></div>
                    <div class="readout"><span>V</span><input type="text" value="5" aria-label="Volts D"><span>mV</span></div>
                </div>
            </div>
        </div>
    </section>
</div>

<div class="watermark">
    <svg viewBox="0 0 72 54">
        <path d="M32 0h32q7 0 7 7v32q-9-2-14-5h-7V24q0-9-9-9H26V6q0-6 6-6z"/>
        <path d="M7 20h28q6 0 6 6v15q0 6-6 6H15q-6 3-14 7V26q0-6 6-6z"/>
        <circle cx="10" cy="33" r="3.500" class="dot"/><circle cx="21" cy="33" r="3.500" class="dot"/><circle cx="33" cy="33" r="3.500" class="dot"/>
    </svg>
    <span>ST中文论坛</span>
</div>

</body>
</html>
```

FILE: styles.css
```
* {
    box-sizing: border-box;
}

body {
    margin: 0;
    background: #fff;
    color: #222;
    font-family: "Open Sans", "Noto Sans CJK SC", sans-serif;
    font-size: 5px;
    overflow: hidden;
}

button, input {
    font: inherit;
    color: inherit;
    margin: 0;
    padding: 0;
    border: 0;
    background: none;
    border-radius: 0;
    outline: none;
    min-width: 0;
}

svg { display: block; }

.defs {
    position: absolute;
    width: 0;
    height: 0;
}

.screen {
    position: relative;
    display: flex;
    flex-direction: column;
    height: calc(100vh - 26px);
    margin: 14px 16px 12px 19px;
}

.ic {
    width: 8px;
    height: 8px;
    flex: none;
}

/* title + menu */
.titlebar {
    display: flex;
    align-items: center;
    gap: 2px;
    height: 10px;
}

.winbtns {
    display: flex;
    gap: 15px;
    margin-left: auto;
    padding-right: 5px;
    font-size: 8px;
    line-height: 10px;
}

.menubar {
    display: flex;
    gap: 6px;
    height: 8px;
    padding-left: 3px;
}

/* toolbar */
.toolbar {
    height: 11px;
    background: #e3edf2;
}

.strip {
    display: flex;
    align-items: center;
    width: 438px;
    height: 11px;
    padding-left: 5px;
    background: linear-gradient(#dff0fa, #b9dcf1);
}

.group {
    display: flex;
    margin-right: 3px;
}

.group.wide { margin-left: 4px; }

.group button {
    width: 9px;
    height: 9px;
}

.group svg {
    width: 8px;
    height: 8px;
}

.on {
    background: #a5cdea;
}

/* tabs */
.tabs {
    display: flex;
    align-items: flex-start;
    height: 15px;
    padding: 2px 0 0 6px;
    background: linear-gradient(#dfe9ee, #edf4f8 75%, #b6d3e8 85%);
}

.tab {
    display: flex;
    align-items: center;
    gap: 2px;
    height: 10px;
    padding: 0 4px;
    background: #cde5f5;
    border: 1px solid #a9cbe0;
    border-bottom: 0;
}

.tab button {
    margin-left: 2px;
}

/* work area */
.main {
    display: flex;
    flex: 1;
    min-height: 0;
    background: #b4d1e8;
}

.modes {
    display: flex;
    flex-direction: column;
    gap: 15px;
    width: 11px;
    padding-top: 4px;
    background: #d9e7f0;
}

.modelist {
    display: flex;
    flex-direction: column;
    height: 194px;
    background: linear-gradient(90deg, #e2f2fc, #b9daf0);
}

.modes button {
    display: flex;
    align-items: center;
    justify-content: center;
    flex: 1;
    min-height: 0;
}

.modes svg {
    width: 8px;
    height: 8px;
}

.modes .letter {
    font: bold 8px/8px "Liberation Serif", serif;
}

.rotate {
    display: flex;
    flex-direction: column;
    height: 46px;
    background: linear-gradient(90deg, #e2f2fc, #b9daf0);
}

.rotate input {
    width: 11px;
    height: 8px;
    background: #fff;
}

.side {
    display: flex;
    flex-direction: column;
    gap: 2px;
    width: 51px;
    padding: 0 2px 0 1px;
    background: #8fb3d4;
}

.overview {
    width: 48px;
    height: 41px;
    background: #dcdcc8;
}

.panel {
    display: flex;
    flex-direction: column;
    flex: 1;
    background: #fff;
    font-family: Roboto, sans-serif;
}

.panel h2 {
    margin: 0;
    height: 10px;
    font-size: 6px;
    line-height: 10px;
    font-weight: normal;
    text-align: center;
    background: linear-gradient(#e9f5fd, #bcdcf0);
}

.panel ul {
    display: flex;
    flex-direction: column;
    height: 69px;
    margin: 0;
    padding: 0;
    list-style: none;
}

.panel li {
    display: flex;
    align-items: center;
    flex: 1;
    padding-left: 1px;
    line-height: 5px;
    white-space: nowrap;
}

.panel .sel {
    color: #b8dbfb;
    background: #0d73d6;
}

.hscroll {
    display: flex;
    align-items: center;
    gap: 2px;
    height: 7px;
    margin-top: auto;
    padding: 0 2px;
    background: #f2f2f2;
    line-height: 6px;
}

.hscroll i {
    flex: 1;
    height: 6px;
    margin-right: 6px;
    background: #cbcbcb;
}

.editor {
    flex: 1;
    min-width: 0;
    border: solid #b4d1e8;
    border-width: 0 2px 0 1px;
    background: #dedecc;
}

.sheet {
    width: 100%;
    height: 100%;
}

.net {
    font: 5px "Liberation Sans", sans-serif;
    fill: #444;
}

.net .ref { font-size: 7px; }

/* run bar */
.status {
    display: flex;
    align-items: center;
    height: 11px;
    padding-left: 8px;
    background: linear-gradient(#b8dcf2, #e6f4fc 50%, #c3e2f3);
}

.run {
    display: flex;
    gap: 8px;
    padding-right: 5px;
}

.run svg {
    width: 7px;
    height: 7px;
}

.messages {
    display: flex;
    align-items: center;
    gap: 2px;
    width: 44px;
    padding-left: 4px;
    border: solid #9bbccf;
    border-width: 0 1px;
}

.messages svg {
    width: 6px;
    height: 6px;
}

.anim {
    padding-left: 4px;
    color: #28603f;
    font-family: Roboto, sans-serif;
}

/* taskbar */
.taskbar {
    display: flex;
    align-items: stretch;
    height: 17px;
    background: linear-gradient(90deg, #cfe2ec, #d9eaf0 50%, #dbdfe1);
}

.start {
    width: 20px;
    padding: 0 6px;
}

.search {
    display: flex;
    align-items: center;
    gap: 5px;
    width: 140px;
    padding-left: 4px;
    background: #fff;
}

.search svg {
    width: 7px;
    height: 7px;
}

.search input {
    flex: 1;
    font-size: 6px;
}

.search input::placeholder { color: #444; }

.apps {
    display: flex;
    padding-left: 1px;
}

.apps button {
    display: flex;
    align-items: center;
    justify-content: center;
    width: 20px;
    border-bottom: 1px solid transparent;
}

.apps svg {
    width: 10px;
    height: 10px;
}

.apps .open { border-bottom-color: #1479bd; }
.apps .active { background: #f3f8fa; }
.apps .hot { background: #f4a55f; }

.apps span {
    width: 10px;
    background: #2fa3dd;
    color: #fff;
    font: bold 5px/10px "Liberation Sans", sans-serif;
}

.apps .atk {
    width: 12px;
    background: #fff;
    color: #e02c3a;
    font-size: 4px;
    line-height: 5px;
}

.tray {
    display: flex;
    align-items: center;
    gap: 4px;
    margin-left: auto;
    padding-right: 9px;
}

.tray svg {
    width: 7px;
    height: 7px;
}

.tray .cloud {
    width: 9px;
    height: 9px;
}

.tray span { font-size: 6px; }
.tray .weather { padding-right: 3px; }

.tray time {
    width: 28px;
    line-height: 7px;
    text-align: center;
}

/* oscilloscope */
.scope {
    position: absolute;
    left: 136px;
    right: 84px;
    top: 36px;
    bottom: 50px;
    display: flex;
    flex-direction: column;
    background: #f0f0f0;
    box-shadow: 0 1px 3px #0008;
}

.scope-title {
    display: flex;
    align-items: center;
    justify-content: space-between;
    height: 11px;
    padding: 0 2px 0 1px;
    background: #fff;
}

.scope-title button {
    width: 7px;
    height: 7px;
    background: #c9494c;
    color: #fff;
    line-height: 7px;
}

.scope-body {
    display: flex;
    flex: 1;
    min-height: 0;
    font-family: "Liberation Sans", sans-serif;
}

.display {
    display: flex;
    flex-direction: column;
    flex: 1;
    min-width: 0;
}

.trace {
    flex: 1;
    width: 100%;
    min-height: 0;
    background: #000;
    border: 2px solid #5c6064;
}

.hscroll.big {
    height: 14px;
    margin: 0;
    font-size: 8px;
}

.hscroll.big i {
    flex: none;
    width: 7px;
    height: 12px;
    margin: 0 auto 0 241px;
}

.modules {
    display: grid;
    grid-template-columns: repeat(3, 76px);
    grid-template-rows: 1fr 1fr;
    gap: 1px;
    padding: 0 1px;
    background: #4c4c50;
}

.module {
    position: relative;
    display: flex;
    flex-direction: column;
    padding: 0 1px;
    background: #a3a3a7;
    border-left: 1px solid #c6c6c8;
    font-size: 7px;
    font-weight: bold;
    color: #111;
}

.module h3 {
    margin: 0 -1px;
    height: 21px;
    border-bottom: 1px solid #55555a;
    font-size: 10px;
    line-height: 24px;
    text-align: center;
    color: var(--tone);
}

.trigger { --tone: #e58592; }
.cha { --tone: #ffff33; }
.chb { --tone: #2a9ce6; }
.chc { --tone: #ea2389; }
.chd { --tone: #12a052; }
.horizontal { --tone: #e48742; }

.controls {
    display: flex;
    justify-content: space-between;
    height: 78px;
    padding: 3px 1px 0 8px;
}

.position {
    display: flex;
    flex-direction: column;
    align-items: center;
    width: 31px;
}

.name {
    line-height: 8px;
}

.frame {
    position: relative;
    width: 31px;
    height: 65px;
    padding: 1px 4px;
    border: 1px solid #55555a;
    border-right-color: #777;
}

/* red pointers either side of the wheel */
.frame::before, .frame::after {
    content: "";
    position: absolute;
    top: 28px;
    border: solid transparent;
    border-width: 4px 0;
}

.frame::before {
    left: 0;
    border-left: 4px solid #e81c1c;
}

.frame::after {
    right: 0;
    border-right: 4px solid #e81c1c;
}

.wheel {
    display: flex;
    flex-direction: column;
    align-items: center;
    justify-content: center;
    height: 61px;
    overflow: hidden;
    background: linear-gradient(#4c4c4c, #a0a0a0 30%, #f6f6f6 50%, #a0a0a0 70%, #4c4c4c);
}

.wheel b {
    flex: none;
    font-size: 9px;
    font-weight: normal;
    line-height: 17px;
}

.wheel.four {
    justify-content: flex-end;
}

/* up/down arrows in the channel colour */
.position::before {
    content: "▲\A▼";
    white-space: pre;
    position: absolute;
    left: 1px;
    top: 54px;
    font: 8px/10px "DejaVu Sans", sans-serif;
    color: var(--tone);
}

.switches {
    display: flex;
    flex-direction: column;
    align-items: flex-end;
    margin-left: -10px;
}

.coupling {
    display: flex;
    gap: 2px;
    height: 47px;
    margin-bottom: 7px;
}

.coupling div {
    display: flex;
    flex-direction: column;
    align-items: flex-end;
    padding-top: 4px;
    line-height: 11px;
}

.coupling.two {
    height: 26px;
    margin-bottom: 10px;
}

.coupling.edge {
    height: 26px;
}

.coupling.edge svg {
    width: 8px;
    height: 24px;
}

input[type=range] {
    appearance: none;
}

.coupling input {
    writing-mode: vertical-lr;
    width: 10px;
    height: 100%;
    border: solid #55555a;
    border-width: 1px 0 0 1px;
    background: linear-gradient(#111, #111) 5px 4px / 2px 90% no-repeat;
}

input[type=range]::-webkit-slider-thumb {
    appearance: none;
    width: 9px;
    height: 12px;
    border: 1px solid;
    border-color: #f4f4f4 #666 #666 #f4f4f4;
    background: repeating-linear-gradient(#c8c8c8 0 1px, #999 1px 2px);
}

.key {
    display: flex;
    align-items: center;
    gap: 2px;
    height: 11px;
    margin-bottom: 2px;
    position: relative;
    z-index: 1;
}

.key.bare { padding-right: 12px; }

.key button, .push button {
    width: 10px;
    height: 11px;
    border: 1px solid;
    border-color: #ddd #444 #444 #ddd;
    background: linear-gradient(135deg, #aaa, #666);
}

.push {
    display: flex;
    flex-direction: column;
    align-items: flex-end;
    gap: 1px;
    padding-right: 1px;
}

.push label {
    display: flex;
    align-items: center;
    gap: 2px;
    height: 12px;
}

.source {
    display: flex;
    flex-direction: column;
    align-items: center;
    line-height: 8px;
    padding-top: 5px;
}

.letters {
    display: flex;
    gap: 7px;
    color: #333;
}

.a { color: #ffff33; }
.b { color: #2a9ce6; }
.c { color: #ea2389; }
.d { color: #12a052; }

.source input {
    width: 49px;
    height: 12px;
    background: linear-gradient(#111, #111) 6px 6px / 100% 2px no-repeat;
}

.source input::-webkit-slider-thumb {
    width: 12px;
    height: 10px;
    background: repeating-linear-gradient(90deg, #ccc 0 2px, #999 2px 3px);
}

.horizontal .source {
    padding-top: 4px;
}

.horizontal .letters {
    gap: 7px;
    align-items: center;
}

.horizontal .letters svg {
    width: 9px;
    height: 5px;
}

.horizontal .source input {
    width: 61px;
}

.timepos {
    display: flex;
    flex-direction: column;
    align-items: center;
    gap: 2px;
    height: 46px;
    padding-top: 4px;
}

.hframe {
    position: relative;
    width: 65px;
    height: 32px;
    padding: 5px 1px;
    border: 1px solid #222;
}

.hframe::before, .hframe::after {
    content: "";
    position: absolute;
    left: 27px;
    border: solid transparent;
    border-width: 0 4px;
}

.hframe::before {
    top: 0;
    border-top: 4px solid #e81c1c;
}

.hframe::after {
    bottom: 0;
    border-bottom: 4px solid #e81c1c;
}

.hwheel {
    display: flex;
    align-items: center;
    justify-content: space-between;
    height: 20px;
    padding: 0 1px;
    background: linear-gradient(90deg, #4c4c4c, #a0a0a0 30%, #f6f6f6 50%, #a0a0a0 70%, #4c4c4c);
}

.hwheel b {
    font-size: 9px;
    font-weight: normal;
}

/* neighbouring marks run into each other */
.hwheel b + b {
    margin-left: -5px;
}

.dial {
    height: 62px;
    color: var(--tone);
}

.dial svg {
    width: 73px;
    height: 62px;
}

.scale {
    font: 6px "Liberation Sans", sans-serif;
    fill: #444;
    text-anchor: middle;
}

.readout {
    display: grid;
    grid-template-columns: 20px 1fr 20px;
    height: 11px;
    font-size: 9px;
    font-weight: normal;
    line-height: 9px;
    text-align: center;
}

.readout span { background: #fff; }

.readout input {
    margin: 0 1px 1px;
    padding-left: 1px;
    background: #fff;
    border: 1px solid #555;
    color: #28288a;
}

/* forum mark */
.watermark {
    position: absolute;
    right: 8px;
    bottom: 7px;
    display: flex;
    flex-direction: column;
    align-items: center;
    gap: 6px;
    color: #6d86a2;
    font-family: "Liberation Sans", "Noto Sans CJK SC", sans-serif;
    font-size: 13px;
    line-height: 16px;
    opacity: .75;
}

.watermark svg {
    width: 72px;
    height: 54px;
    fill: #58779a;
}

.watermark .dot { fill: #fff; }
```
